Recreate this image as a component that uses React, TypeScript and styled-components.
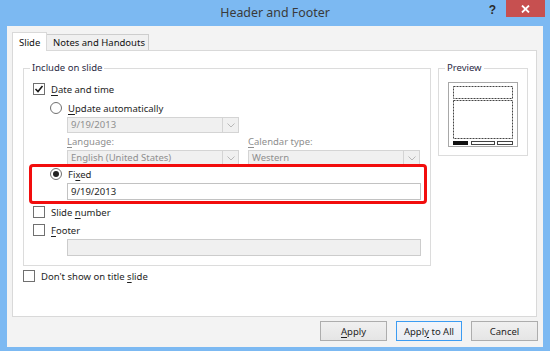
import React from 'react';
import styled, { createGlobalStyle } from 'styled-components';

const Global = createGlobalStyle`
  html, body { margin: 0; padding: 0; }
  body {
    font-family: "Noto Sans", "Liberation Sans", sans-serif;
    font-size: 9.5px;
    color: #1e1e1e;
  }
  * { box-sizing: border-box; }
  u { text-decoration-thickness: 1px; text-underline-offset: 1.5px; }
`;

const Window = styled.div`
  width: 550px;
  height: 351px;
  background: #7cb9f2;
  display: flex;
  flex-direction: column;
  overflow: hidden;
`;

const TitleBar = styled.div`
  height: 26px;
  display: grid;
  grid-template-columns: 1fr auto 1fr;
  align-items: start;
`;

const Title = styled.div`
  grid-column: 2;
  font-size: 12.4px;
  line-height: 26px;
  color: #3a3a3a;
`;

const Controls = styled.div`
  grid-column: 3;
  display: flex;
  justify-content: flex-end;
  align-items: flex-start;
  padding-right: 5px;
`;

const Help = styled.div`
  font-family: "Liberation Sans", sans-serif;
  font-weight: bold;
  font-size: 12px;
  line-height: 12px;
  color: #2a2a2a;
  margin-top: 4px;
  margin-right: 10px;
`;

const Close = styled.div`
  width: 39px;
  height: 17px;
  background: #c75050;
  display: flex;
  align-items: center;
  justify-content: center;
`;

const Client = styled.div`
  flex: 1;
  margin: 0 7px 4px 7px;
  background: #f3f3f3;
  padding: 6px 6px 0 5px;
  display: flex;
  flex-direction: column;
`;

const TabStrip = styled.div`
  height: 18px;
  display: flex;
  align-items: flex-end;
`;

const Tab = styled.div<{ $active?: boolean }>`
  position: relative;
  z-index: ${p => (p.$active ? 1 : 0)};
  height: ${p => (p.$active ? '19px' : '16px')};
  margin-bottom: ${p => (p.$active ? '-1px' : '0')};
  width: ${p => (p.$active ? '35px' : '102px')};
  background: ${p => (p.$active ? '#ffffff' : '#f0f0f0')};
  border: 1px solid ${p => (p.$active ? '#d9d9d9' : '#cdcdcd')};
  border-bottom: none;
  border-left-width: ${p => (p.$active ? '1px' : '0')};
  padding-left: 6px;
  display: flex;
  align-items: center;
  color: #111;
`;

const Panel = styled.div`
  height: 267px;
  background: #ffffff;
  border: 1px solid #d9d9d9;
  padding: 17px 8px 0 10px;
  display: flex;
  flex-direction: column;
`;

const TopRow = styled.div`
  display: flex;
  align-items: flex-start;
  gap: 7px;
`;

const Group = styled.div<{ $w: number }>`
  position: relative;
  width: ${p => p.$w}px;
  border: 1px solid #dcdcdc;
  display: flex;
  flex-direction: column;
`;

const GroupTitle = styled.div`
  position: absolute;
  top: -7px;
  left: 6px;
  padding: 0 2px;
  background: #fff;
  line-height: 12px;
  color: #2b2b45;
`;

const IncludeBody = styled.div`
  padding: 13px 9px 9px 9px;
  display: flex;
  flex-direction: column;
`;

const PreviewBody = styled.div`
  padding: 13px 9px 8px 9px;
`;

const OptionRow = styled.div<{ $indent?: number; $mt?: number; $h?: number }>`
  display: flex;
  align-items: center;
  gap: 6px;
  height: ${p => p.$h ?? 14}px;
  margin-left: ${p => p.$indent ?? 0}px;
  margin-top: ${p => p.$mt ?? 0}px;
  white-space: nowrap;
`;

const CheckBox = styled.span`
  width: 12px;
  height: 12px;
  flex: none;
  border: 1px solid #707070;
  background: #fff;
  display: flex;
  align-items: center;
  justify-content: center;
`;

const Radio = styled.span<{ $checked?: boolean }>`
  width: 12px;
  height: 12px;
  flex: none;
  border: 1px solid #707070;
  border-radius: 50%;
  background: #fff;
  display: flex;
  align-items: center;
  justify-content: center;
  &::after {
    content: '';
    display: ${p => (p.$checked ? 'block' : 'none')};
    width: 6px;
    height: 6px;
    border-radius: 50%;
    background: #222;
  }
`;

const ComboPair = styled.div<{ $mt?: number }>`
  display: grid;
  grid-template-columns: 172px 172px;
  column-gap: 9px;
  margin-left: 34px;
  margin-top: ${p => p.$mt ?? 0}px;
`;

const FieldLabel = styled.div`
  line-height: 12px;
  height: 12px;
  color: #8e8e8e;
  white-space: nowrap;
`;

const Combo = styled.div`
  height: 16px;
  border: 1px solid #d4d4d4;
  background: #f0f0f0;
  display: flex;
  align-items: stretch;
`;

const ComboText = styled.div`
  flex: 1;
  padding-left: 3px;
  line-height: 14px;
  color: #8f8f8f;
  white-space: nowrap;
`;

const ComboArrow = styled.div`
  width: 16px;
  border-left: 1px solid #d4d4d4;
  display: flex;
  align-items: center;
  justify-content: center;
`;

const Highlight = styled.div`
  margin-top: -2px;
  margin-left: -4px;
  width: 398px;
  height: 40px;
  border: 3px solid #f20d0d;
  border-radius: 4px;
  padding: 1px 0 0 18px;
  display: flex;
  flex-direction: column;
`;

const TextBox = styled.div<{ $disabled?: boolean; $mt?: number }>`
  width: 354px;
  height: 17px;
  margin-top: ${p => p.$mt ?? 0}px;
  border: 1px solid ${p => (p.$disabled ? '#cccccc' : '#c2c2c2')};
  background: ${p => (p.$disabled ? '#f0f0f0' : '#ffffff')};
  padding-left: 3px;
  line-height: 15px;
  color: #1e1e1e;
`;

const InputIndent = styled.div<{ $indent: number }>`
  margin-left: ${p => p.$indent}px;
`;

const Thumb = styled.div`
  width: 70px;
  height: 65px;
`;

const ButtonRow = styled.div`
  margin-top: 4px;
  margin-right: -1px;
  display: flex;
  justify-content: flex-end;
  gap: 9px;
`;

const Button = styled.div<{ $w: number; $default?: boolean }>`
  width: ${p => p.$w}px;
  height: 20px;
  border: 1px solid ${p => (p.$default ? '#3c9cf2' : '#adadad')};
  background: ${p => (p.$default ? 'linear-gradient(#f3f6fb, #e9edf3)' : 'linear-gradient(#f0f0f0, #e5e5e5)')};
  display: flex;
  align-items: center;
  justify-content: center;
  color: #1e1e1e;
`;

const Chevron = () => (
  <svg width="8" height="5" viewBox="0 0 8 5">
    <path d="M0.5 0.5 L4 4 L7.5 0.5" fill="none" stroke="#b8b8b8" strokeWidth="1" />
  </svg>
);

const CheckMark = () => (
  <svg width="10" height="10" viewBox="0 0 10 10">
    <path d="M1.5 5 L4 7.5 L8.5 2" fill="none" stroke="#1a1a1a" strokeWidth="1.6" />
  </svg>
);

const CloseGlyph = () => (
  <svg width="9" height="8" viewBox="0 0 9 8">
    <path d="M1 0.5 L8 7.5 M8 0.5 L1 7.5" stroke="#ffffff" strokeWidth="1.8" />
  </svg>
);

const PreviewArt = () => (
  <svg width="70" height="65" viewBox="0 0 70 65">
    <rect x="0.5" y="0.5" width="69" height="64" fill="#fff" stroke="#a8a8a8" />
    <rect x="5.5" y="4.5" width="59" height="12" fill="none" stroke="#444" strokeDasharray="2 1" />
    <rect x="5.5" y="18.5" width="59" height="38" fill="none" stroke="#444" strokeDasharray="2 1" />
    <rect x="5" y="59" width="15" height="4" fill="#111" />
    <rect x="23.5" y="59.5" width="23" height="3" fill="#fff" stroke="#444" />
    <rect x="49.5" y="59.5" width="15" height="3" fill="#fff" stroke="#444" />
  </svg>
);

export default function App() {
  return (
    <>
      <Global />
      <Window>
        <TitleBar>
          <Title>Header and Footer</Title>
          <Controls>
            <Help>?</Help>
            <Close><CloseGlyph /></Close>
          </Controls>
        </TitleBar>
        <Client>
          <TabStrip>
            <Tab $active>Slide</Tab>
            <Tab>Notes and Handouts</Tab>
          </TabStrip>
          <Panel>
            <TopRow>
              <Group $w={408}>
                <GroupTitle>Include on slide</GroupTitle>
                <IncludeBody>
                  <OptionRow>
                    <CheckBox><CheckMark /></CheckBox>
                    <span><u>D</u>ate and time</span>
                  </OptionRow>
                  <OptionRow $indent={17} $mt={5}>
                    <Radio />
                    <span><u>U</u>pdate automatically</span>
                  </OptionRow>
                  <ComboPair $mt={2}>
                    <Combo>
                      <ComboText>9/19/2013</ComboText>
                      <ComboArrow><Chevron /></ComboArrow>
                    </Combo>
                  </ComboPair>
                  <ComboPair $mt={3}>
                    <FieldLabel><u>L</u>anguage:</FieldLabel>
                    <FieldLabel><u>C</u>alendar type:</FieldLabel>
                  </ComboPair>
                  <ComboPair $mt={2}>
                    <Combo>
                      <ComboText>English (United States)</ComboText>
                      <ComboArrow><Chevron /></ComboArrow>
                    </Combo>
                    <Combo>
                      <ComboText>Western</ComboText>
                      <ComboArrow><Chevron /></ComboArrow>
                    </Combo>
                  </ComboPair>
                  <Highlight>
                    <OptionRow $h={12}>
                      <Radio $checked />
                      <span>Fi<u>x</u>ed</span>
                    </OptionRow>
                    <InputIndent $indent={17}>
                      <TextBox $mt={3}>9/19/2013</TextBox>
                    </InputIndent>
                  </Highlight>
                  <OptionRow $mt={1}>
                    <CheckBox />
                    <span>Slide <u>n</u>umber</span>
                  </OptionRow>
                  <OptionRow $mt={4}>
                    <CheckBox />
                    <span><u>F</u>ooter</span>
                  </OptionRow>
                  <InputIndent $indent={34}>
                    <TextBox $disabled $mt={2} />
                  </InputIndent>
                </IncludeBody>
              </Group>
              <Group $w={90}>
                <GroupTitle>Preview</GroupTitle>
                <PreviewBody>
                  <Thumb><PreviewArt /></Thumb>
                </PreviewBody>
              </Group>
            </TopRow>
            <OptionRow $mt={3}>
              <CheckBox />
              <span>Don't show on title <u>s</u>lide</span>
            </OptionRow>
          </Panel>
          <ButtonRow>
            <Button $w={67}><span><u>A</u>pply</span></Button>
            <Button $w={66} $default><span>Appl<u>y</u> to All</span></Button>
            <Button $w={67}>Cancel</Button>
          </ButtonRow>
        </Client>
      </Window>
    </>
  );
}
